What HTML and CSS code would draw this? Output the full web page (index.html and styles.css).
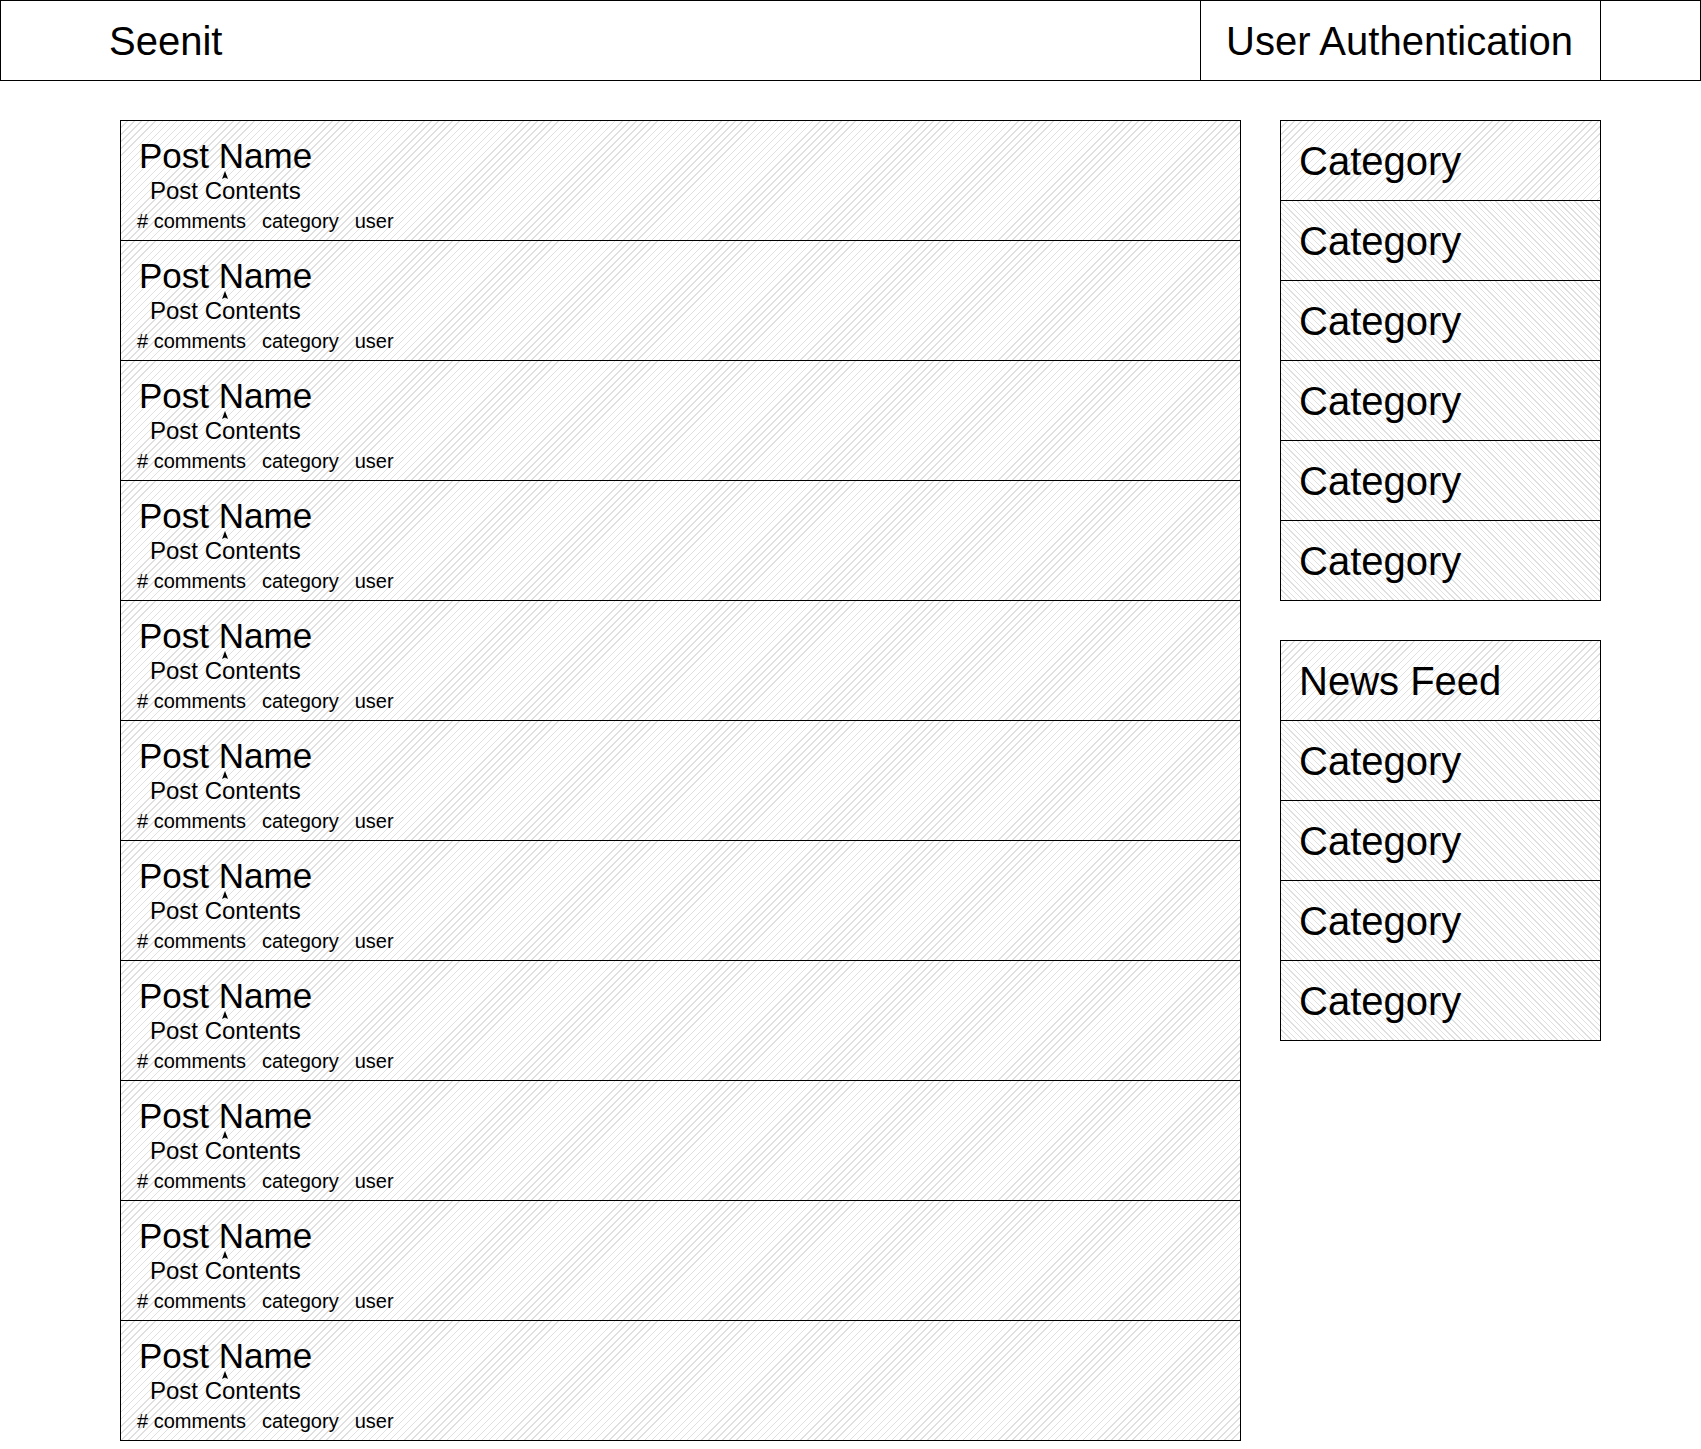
FILE: index.html
```html
<!DOCTYPE html>
<html>
<head>
<meta charset="utf-8">
<title>Seenit</title>
<link rel="stylesheet" href="styles.css">
</head>
<body>
<header class="topbar">
  <div class="brand">Seenit</div>
  <div class="auth">User Authentication</div>
  <div class="blank"></div>
</header>
<main class="layout">
  <section class="posts">
    <article class="post"><div class="post-name">Post Name</div><div class="post-contents">Post Contents</div><div class="meta"><span># comments</span><span>category</span><span>user</span></div><svg class="arrow" viewBox="0 0 6 8" width="6" height="8"><path d="M3 0 L6 8 L3 6.5 L0 8 Z"/></svg></article>
    <article class="post"><div class="post-name">Post Name</div><div class="post-contents">Post Contents</div><div class="meta"><span># comments</span><span>category</span><span>user</span></div><svg class="arrow" viewBox="0 0 6 8" width="6" height="8"><path d="M3 0 L6 8 L3 6.5 L0 8 Z"/></svg></article>
    <article class="post"><div class="post-name">Post Name</div><div class="post-contents">Post Contents</div><div class="meta"><span># comments</span><span>category</span><span>user</span></div><svg class="arrow" viewBox="0 0 6 8" width="6" height="8"><path d="M3 0 L6 8 L3 6.5 L0 8 Z"/></svg></article>
    <article class="post"><div class="post-name">Post Name</div><div class="post-contents">Post Contents</div><div class="meta"><span># comments</span><span>category</span><span>user</span></div><svg class="arrow" viewBox="0 0 6 8" width="6" height="8"><path d="M3 0 L6 8 L3 6.5 L0 8 Z"/></svg></article>
    <article class="post"><div class="post-name">Post Name</div><div class="post-contents">Post Contents</div><div class="meta"><span># comments</span><span>category</span><span>user</span></div><svg class="arrow" viewBox="0 0 6 8" width="6" height="8"><path d="M3 0 L6 8 L3 6.5 L0 8 Z"/></svg></article>
    <article class="post"><div class="post-name">Post Name</div><div class="post-contents">Post Contents</div><div class="meta"><span># comments</span><span>category</span><span>user</span></div><svg class="arrow" viewBox="0 0 6 8" width="6" height="8"><path d="M3 0 L6 8 L3 6.5 L0 8 Z"/></svg></article>
    <article class="post"><div class="post-name">Post Name</div><div class="post-contents">Post Contents</div><div class="meta"><span># comments</span><span>category</span><span>user</span></div><svg class="arrow" viewBox="0 0 6 8" width="6" height="8"><path d="M3 0 L6 8 L3 6.5 L0 8 Z"/></svg></article>
    <article class="post"><div class="post-name">Post Name</div><div class="post-contents">Post Contents</div><div class="meta"><span># comments</span><span>category</span><span>user</span></div><svg class="arrow" viewBox="0 0 6 8" width="6" height="8"><path d="M3 0 L6 8 L3 6.5 L0 8 Z"/></svg></article>
    <article class="post"><div class="post-name">Post Name</div><div class="post-contents">Post Contents</div><div class="meta"><span># comments</span><span>category</span><span>user</span></div><svg class="arrow" viewBox="0 0 6 8" width="6" height="8"><path d="M3 0 L6 8 L3 6.5 L0 8 Z"/></svg></article>
    <article class="post"><div class="post-name">Post Name</div><div class="post-contents">Post Contents</div><div class="meta"><span># comments</span><span>category</span><span>user</span></div><svg class="arrow" viewBox="0 0 6 8" width="6" height="8"><path d="M3 0 L6 8 L3 6.5 L0 8 Z"/></svg></article>
    <article class="post"><div class="post-name">Post Name</div><div class="post-contents">Post Contents</div><div class="meta"><span># comments</span><span>category</span><span>user</span></div><svg class="arrow" viewBox="0 0 6 8" width="6" height="8"><path d="M3 0 L6 8 L3 6.5 L0 8 Z"/></svg></article>
  </section>
  <aside class="sidebar">
    <ul class="panel">
      <li class="item hatch-a">Category</li>
      <li class="item hatch-b">Category</li>
      <li class="item hatch-b">Category</li>
      <li class="item hatch-b">Category</li>
      <li class="item hatch-b">Category</li>
      <li class="item hatch-b">Category</li>
    </ul>
    <ul class="panel">
      <li class="item hatch-a">News Feed</li>
      <li class="item hatch-b">Category</li>
      <li class="item hatch-b">Category</li>
      <li class="item hatch-b">Category</li>
      <li class="item hatch-b">Category</li>
    </ul>
  </aside>
</main>
</body>
</html>
```

FILE: styles.css
```css
* { box-sizing: border-box; }

html, body {
  margin: 0;
  padding: 0;
  background: #fff;
}

body {
  font-family: "Liberation Sans", Arial, sans-serif;
  color: #000;
  width: 1701px;
}

.topbar {
  display: flex;
  height: 81px;
  border: 1px solid #000;
  width: 1701px;
}

.brand {
  width: 1199px;
  padding-left: 108px;
  padding-top: 2px;
  font-size: 40px;
  display: flex;
  align-items: center;
}

.auth {
  width: 401px;
  border-left: 1px solid #000;
  border-right: 1px solid #000;
  padding-left: 25px;
  padding-top: 2px;
  font-size: 40px;
  display: flex;
  align-items: center;
  white-space: nowrap;
}

.blank {
  flex: 1;
}

.layout {
  display: flex;
  align-items: flex-start;
  gap: 39px;
  padding-left: 120px;
  margin-top: 39px;
}

.posts {
  width: 1121px;
  border: 1px solid #000;
}

.post {
  position: relative;
  height: 120px;
  border-top: 1px solid #000;
  padding: 15px 0 0 16px;
  background: repeating-linear-gradient(135deg, rgba(0,0,0,0) 0 4px, #e0e0e0 4px 5px);
}

.post:first-child {
  border-top: 0;
  height: 119px;
}

.post-name {
  font-size: 35px;
  line-height: 40px;
  margin-left: 2px;
  white-space: nowrap;
}

.post-contents {
  font-size: 24px;
  line-height: 30px;
  margin-left: 13px;
  margin-top: 0;
  white-space: nowrap;
}

.meta {
  display: flex;
  gap: 16px;
  font-size: 20px;
  line-height: 26px;
  margin-top: 2px;
  white-space: nowrap;
}

.arrow {
  position: absolute;
  left: 101px;
  top: 50px;
  fill: #000;
}

.sidebar {
  width: 321px;
  display: flex;
  flex-direction: column;
  gap: 39px;
}

.panel {
  list-style: none;
  margin: 0;
  padding: 0;
  border: 1px solid #000;
}

.item {
  height: 80px;
  border-top: 1px solid #000;
  padding-left: 18px;
  padding-top: 2px;
  font-size: 40px;
  display: flex;
  align-items: center;
  white-space: nowrap;
}

.item:first-child {
  border-top: 0;
  height: 79px;
}

.hatch-a {
  background: repeating-linear-gradient(135deg, rgba(0,0,0,0) 0 4px, #e0e0e0 4px 5px);
}

.hatch-b {
  background: repeating-linear-gradient(45deg, rgba(0,0,0,0) 0 3px, #e0e0e0 3px 4px);
}
```
